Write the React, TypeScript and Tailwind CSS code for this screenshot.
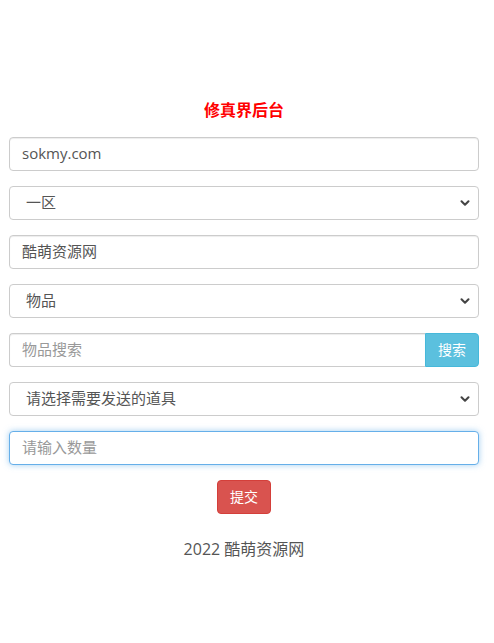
import { ChevronDown } from 'lucide-react';

const font = { fontFamily: '"Open Sans", "Noto Sans CJK SC", sans-serif' };

function Field({ value, placeholder, focused }: { value?: string; placeholder?: string; focused?: boolean }) {
  return (
    <div
      className={`h-[34px] w-full rounded-[4px] border bg-white px-3 pb-[2px] flex items-center text-[15px] ${
        focused
          ? 'border-[#66afe9] shadow-[0_0_6px_rgba(102,175,233,0.6)]'
          : 'border-[#ccc] shadow-[inset_0_1px_1px_rgba(0,0,0,0.075)]'
      } ${value ? 'text-[#555]' : 'text-[#999]'}`}
    >
      {value ?? placeholder}
    </div>
  );
}

function Select({ value }: { value: string }) {
  return (
    <div className="h-[34px] w-full rounded-[4px] border border-[#ccc] bg-white pl-4 pr-1.5 pb-[2px] flex items-center justify-between text-[15px] text-[#555]">
      <span>{value}</span>
      <ChevronDown className="h-[14px] w-[14px] text-[#444] mt-[2px]" strokeWidth={3.5} />
    </div>
  );
}

export default function App() {
  return (
    <div className="min-h-[643px] bg-white pt-[99px]" style={font}>
      <div className="pl-[9px] pr-[15px] flex flex-col">
        <h1 className="text-center text-[16px] font-bold text-[#f00] leading-[22px]">修真界后台</h1>
        <div className="mt-[16px] flex flex-col gap-[15px]">
          <Field value="sokmy.com" />
          <Select value="一区" />
          <Field value="酷萌资源网" />
          <Select value="物品" />
          <div className="flex h-[34px]">
            <div className="flex-1 rounded-l-[4px] border border-r-0 border-[#ccc] px-3 pb-[2px] flex items-center text-[15px] text-[#999] shadow-[inset_0_1px_1px_rgba(0,0,0,0.075)]">
              物品搜索
            </div>
            <button className="w-[54px] rounded-r-[4px] bg-[#5bc0de] border border-[#46b8da] text-white text-[14px] pb-[1px]">
              搜索
            </button>
          </div>
          <Select value="请选择需要发送的道具" />
          <Field placeholder="请输入数量" focused />
        </div>
        <div className="mt-[15px] flex justify-center">
          <button className="h-[34px] w-[54px] rounded-[4px] bg-[#d9534f] border border-[#d43f3a] text-white text-[14px] pb-[1px]">
            提交
          </button>
        </div>
        <p className="mt-[23px] text-center text-[16px] text-[#555]">2022 酷萌资源网</p>
      </div>
    </div>
  );
}
